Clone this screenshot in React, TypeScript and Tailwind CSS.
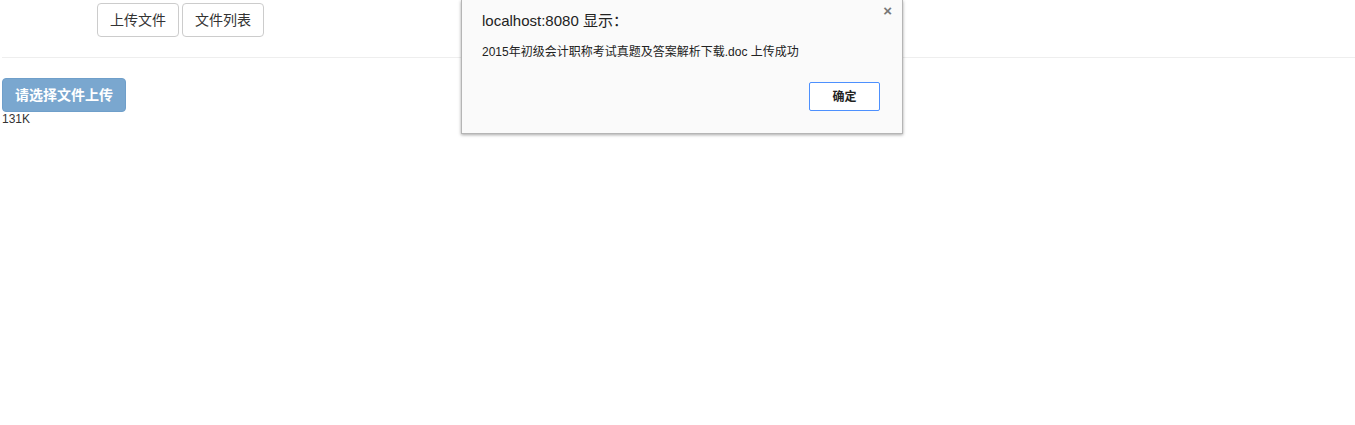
import React from "react"

const font = { fontFamily: '"Liberation Sans", "Noto Sans CJK SC", sans-serif' }

export default function App() {
  return (
    <div className="relative w-[1355px] h-[425px] bg-white text-[#333] text-[12px]" style={font}>
      {/* top nav */}
      <div className="flex gap-[3px] pl-[97px] pt-[3px]">
        <button className="h-[34px] w-[82px] rounded-[4px] border border-[#ccc] bg-white text-[14px] text-[#333]">上传文件</button>
        <button className="h-[34px] w-[82px] rounded-[4px] border border-[#ccc] bg-white text-[14px] text-[#333]">文件列表</button>
      </div>
      <div className="mt-[20px] ml-[2px] border-t border-[#eee]" />

      <div className="pl-[2px] pt-[20px]">
        <button className="h-[34px] w-[124px] rounded-[4px] border border-[#6f9fca] bg-[#7aa7cf] text-[14px] font-bold text-white">
          请选择文件上传
        </button>
        <div className="text-[12px] leading-[15px] text-[#333]">131K</div>
      </div>

      {/* browser alert */}
      <div className="absolute left-[461px] top-0 w-[442px] h-[134px] bg-[#fafafa] border border-t-0 border-[#b5b5b5] shadow-[0_1px_3px_rgba(0,0,0,0.35)]">
        <span className="absolute right-[10px] top-[2px] text-[15px] font-bold leading-[18px] text-[#777]">×</span>
        <div className="pl-[20px] pt-[10px] text-[15px] leading-[22px] text-[#222]">localhost:8080 显示：</div>
        <div className="pl-[20px] pt-[11px] text-[12px] leading-[18px] text-[#222]">
          2015年初级会计职称考试真题及答案解析下载.doc 上传成功
        </div>
        <div className="flex justify-end pr-[22px] pt-[21px]">
          <button className="h-[29px] w-[71px] rounded-[2px] border border-[#4d90fe] bg-white text-[12px] font-bold text-[#222]">确定</button>
        </div>
      </div>
    </div>
  )
}
